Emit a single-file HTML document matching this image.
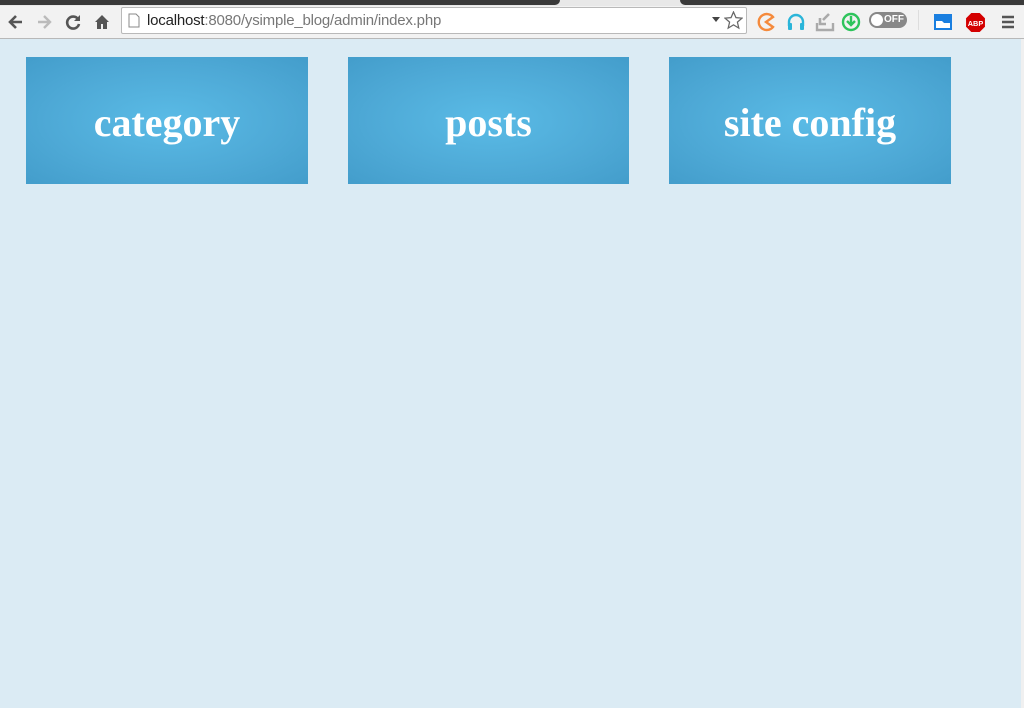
<!DOCTYPE html>
<html><head><style>
body{margin:0;width:1024px;height:708px;overflow:hidden;background:#dbebf4;font-family:"Liberation Sans",sans-serif;position:relative}
.tabs{position:absolute;left:0;top:0;width:1024px;height:8px;background:#e8e8e8}
.tabs .d{position:absolute;top:0;height:5px;background:#3a3a3a}
.bar{position:absolute;left:0;top:6px;width:1024px;height:32px;background:#f2f2f2;border-bottom:1px solid #b8b8b8}
.url{position:absolute;left:121px;top:1px;width:624px;height:25px;background:#fff;border:1px solid #b9b9b9;border-radius:2px}
.url span{position:absolute;left:25px;top:4px;font-size:15px;color:#222;letter-spacing:-0.2px}
.url span i{font-style:normal;color:#777}
.box{position:absolute;top:57px;width:282px;height:127px;background:radial-gradient(ellipse at center,#5abbe6 0%,#4ea9d6 60%,#439dcb 100%);color:#fff;font-family:"Liberation Serif",serif;font-weight:bold;font-size:40px;text-align:center;line-height:131px}
.ic{position:absolute;top:6px}
</style></head><body>
<div class="tabs"><div class="d" style="left:0;width:560px;border-radius:0 0 6px 0"></div><div class="d" style="left:680px;width:344px;border-radius:0 0 0 6px"></div></div>
<div class="bar">
<svg class="ic" style="left:6px" width="20" height="20" viewBox="0 0 20 20"><path d="M16 10H5M10 4L4 10l6 6" stroke="#555" stroke-width="2.6" fill="none"/></svg>
<svg class="ic" style="left:34px" width="20" height="20" viewBox="0 0 20 20"><path d="M4 10h11M10 4l6 6-6 6" stroke="#bbb" stroke-width="2.4" fill="none"/></svg>
<svg class="ic" style="left:63px" width="20" height="20" viewBox="0 0 20 20"><path d="M15 7A6 6 0 1 0 16 12" stroke="#555" stroke-width="2.6" fill="none"/><path d="M17 3v6h-6z" fill="#555"/></svg>
<svg class="ic" style="left:92px" width="20" height="20" viewBox="0 0 20 20"><path d="M10 3L3 10h2v7h4v-5h2v5h4v-7h2z" fill="#555"/></svg>
<div class="url"><svg style="position:absolute;left:6px;top:5px" width="12" height="15" viewBox="0 0 12 15"><path d="M1 1h7l3 3v10H1z" fill="#fff" stroke="#888"/></svg><span>localhost<i>:8080/ysimple_blog/admin/index.php</i></span>
<svg style="position:absolute;left:590px;top:9px" width="8" height="5"><path d="M0 0h8L4 5z" fill="#444"/></svg>
<svg style="position:absolute;left:602px;top:3px" width="19" height="19" viewBox="0 0 20 20"><path d="M10 1l2.6 6 6.4.5-4.9 4.2 1.5 6.3L10 14.6 4.4 18l1.5-6.3L1 7.5 7.4 7z" fill="none" stroke="#666" stroke-width="1.3"/></svg></div>
<svg class="ic" style="left:756px" width="20" height="20" viewBox="0 0 20 20"><path d="M17 5A8 8 0 1 0 17 15L10 10z" fill="none" stroke="#f58a3c" stroke-width="2.4"/></svg>
<svg class="ic" style="left:786px" width="20" height="20" viewBox="0 0 20 20"><path d="M3 14V10a7 7 0 0 1 14 0v4" fill="none" stroke="#2bb5d9" stroke-width="2.4"/><rect x="2" y="11" width="4" height="7" rx="1" fill="#2bb5d9"/><rect x="14" y="11" width="4" height="7" rx="1" fill="#2bb5d9"/></svg>
<svg class="ic" style="left:815px" width="20" height="20" viewBox="0 0 20 20"><path d="M2 11v7h16v-7" fill="none" stroke="#aaa" stroke-width="2.4"/><path d="M14 2L8 8M5 6v6h6" fill="none" stroke="#aaa" stroke-width="2.6"/></svg>
<svg class="ic" style="left:841px" width="20" height="20" viewBox="0 0 20 20"><circle cx="10" cy="10" r="8" fill="none" stroke="#2ec45c" stroke-width="2.4"/><path d="M10 4v8M6 9l4 4 4-4" fill="none" stroke="#2ec45c" stroke-width="2.4"/></svg>
<div style="position:absolute;left:869px;top:6px;width:38px;height:16px;border-radius:8px;background:#888"><div style="position:absolute;left:2px;top:2px;width:12px;height:12px;border-radius:6px;background:#fff"></div><span style="position:absolute;left:15px;top:2px;font-size:10px;font-weight:bold;color:#fff">OFF</span></div>
<div style="position:absolute;left:918px;top:4px;width:1px;height:20px;background:#ddd"></div>
<svg class="ic" style="left:933px" width="20" height="20" viewBox="0 0 20 20"><rect x="1" y="2" width="18" height="16" fill="#1a7fe0"/><path d="M3 9h6l2 2h6v5H3z" fill="#fff"/></svg>
<svg class="ic" style="left:965px" width="21" height="21" viewBox="0 0 20 20"><path d="M6 1h8l5 5v8l-5 5H6l-5-5V6z" fill="#d40000"/><text x="10" y="13.5" font-size="7" font-weight="bold" fill="#fff" text-anchor="middle" font-family="Liberation Sans">ABP</text></svg>
<svg class="ic" style="left:1000px" width="16" height="20" viewBox="0 0 16 20"><path d="M2 5h12M2 10h12M2 15h12" stroke="#555" stroke-width="2.5"/></svg>
</div>
<div style="position:absolute;right:0;top:39px;width:3px;height:669px;background:#f0f0f0"></div>
<div class="box" style="left:26px">category</div>
<div class="box" style="left:348px;width:281px">posts</div>
<div class="box" style="left:669px">site config</div>
</body></html>
